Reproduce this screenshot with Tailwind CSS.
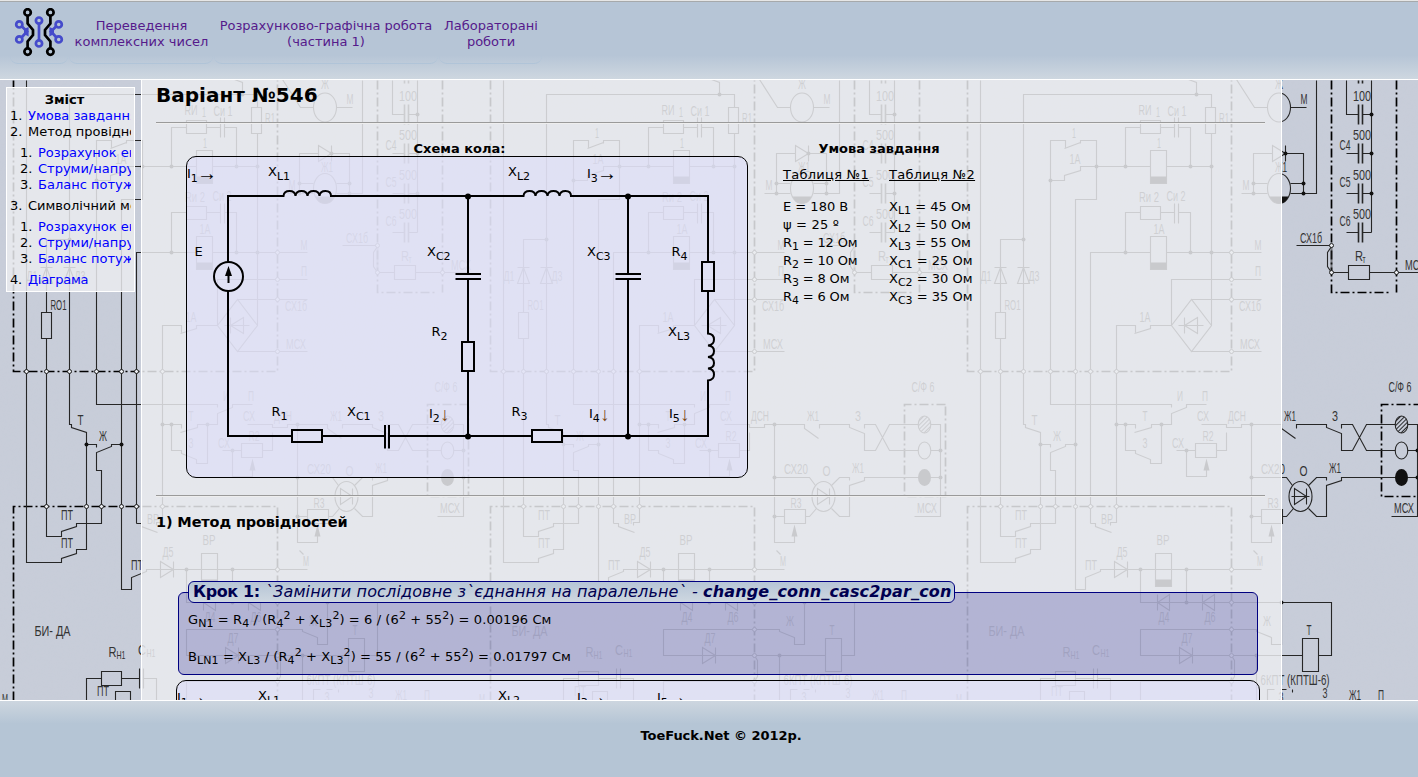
<!DOCTYPE html>
<html lang="uk">
<head>
<meta charset="utf-8">
<title>Варіант №546</title>
<script src="https://cdn.jsdelivr.net/npm/@tailwindcss/browser@4"></script>
</head>
<body class="w-[1418px] h-[777px] overflow-hidden flex flex-col text-[13px] leading-4 text-black bg-[#c6cbd7] [font-family:'DejaVu_Sans',sans-serif]">

<header class="h-20 shrink-0 border-b border-white bg-linear-to-b from-[#b6c5d6] from-70% to-[#ced7e0]">
  <div class="h-px bg-[#e6e6e6]"></div>
  <div class="h-px bg-[#a6a9ab]"></div>
  <nav class="flex h-[62px] gap-px pl-2.5 text-center text-[#551a8b]">
    <a class="w-[58px] rounded-b-lg border-b border-[#b0c4d8] pl-1 pt-1.5">
      <svg width="50" height="50" viewBox="14 8 50 50" fill="none">
        <g stroke="#000" stroke-width="2.7">
          <circle cx="27.6" cy="12.4" r="3.2"/><circle cx="50.4" cy="12.4" r="3.2"/>
          <circle cx="27.6" cy="51.6" r="3.2"/><circle cx="50.4" cy="51.6" r="3.2"/>
          <path d="M27.6 16V23.5L33 30V35L27.6 41.5V48M50.4 16V23.5L45 30V35L50.4 41.5V48"/>
        </g>
        <g stroke="#454bcb" stroke-width="2.7">
          <circle cx="39" cy="20.6" r="3.1"/><circle cx="39" cy="43.4" r="3.1"/><path d="M39 24V40"/>
          <circle cx="19.3" cy="24.4" r="3.1"/><circle cx="19.3" cy="39.4" r="3.1"/>
          <circle cx="58.7" cy="24.4" r="3.1"/><circle cx="58.7" cy="39.4" r="3.1"/>
          <path d="M22 26.5L27 31.5L22 37M56 26.5L51 31.5L56 37"/>
        </g>
        <path d="M24 29L28.6 27V36.5L24 34ZM54 29L49.4 27V36.5L54 34Z" fill="#454bcb"/>
      </svg>
    </a>
    <a class="w-36 rounded-b-lg border-b border-[#b0c4d8] pt-4 pl-px whitespace-nowrap">Переведення<br>комплексних чисел</a>
    <a class="w-[224px] rounded-b-lg border-b border-[#b0c4d8] pt-4 whitespace-nowrap">Розрахунково-графічна робота<br>(частина 1)</a>
    <a class="w-[103px] rounded-b-lg border-b border-[#b0c4d8] pt-4 pl-px whitespace-nowrap">Лабораторані<br>роботи</a>
  </nav>
</header>

<div class="relative h-[620px] shrink-0 overflow-hidden">
  <svg class="absolute inset-0" width="1418" height="620" viewBox="0 80 1418 620">
    <defs>
      <filter id="grain" x="0" y="0" width="100%" height="100%">
        <feTurbulence type="fractalNoise" baseFrequency="0.35" numOctaves="2" seed="4"/>
        <feColorMatrix values="0 0 0 0 .55  0 0 0 0 .6  0 0 0 0 .68  .9 0 0 0 -.3"/>
      </filter>
      <pattern id="hatch" width="3" height="3" patternUnits="userSpaceOnUse" patternTransform="rotate(45)"><path d="M0 0V3" stroke="#000" stroke-width="1.6"/></pattern>
      <g id="tile">
        <g transform="translate(.5 .5)" fill="none" stroke="#262626" stroke-width="1.1">
          <g stroke="#000" stroke-width="1.7" stroke-dasharray="9 3 2 3">
            <path d="M13 80V371H277V80M13 700V506H277V700M377 80V292H437M442 80V292M468 404H427V496H468V404"/>
          </g>
          <path d="M26 80V562H61V558L76 553V549H86V432L71 427V424H69V94H257V107M46 312V239H69M46 338V536H61V531L76 526V523H101V470H96V452L111 446V444H121M86 444H96V447"/>
          <path d="M41 312H51V338H41ZM46 267L40 283H52ZM69 267L63 283H75ZM40 267H52M63 267H75M242 94V82L234 79"/>
          <path d="M217 407V404H96V140H111V147M110 148L126 142M126 143V140H142V199H121V589H131V577L146 571V569H307M96 180H110V175L126 170V166H196M212 166H257M136 523V252H196M212 252H307M136 523H141V526L157 532M156 525V522H162V325H181V332M180 333L196 328V325H217"/>
          <path d="M196 150H212V183H196ZM196 236H212V269H196ZM171 166V127H186M206 127H220M224 127H236V166M186 120H206V133H186ZM220 117V137M224 117V137M171 252V212H186M206 212H220M224 212H236V252M186 206H206V219H186ZM220 203V223M224 203V223"/>
          <path d="M251 107H261V133H251ZM257 133V325L237 351L217 325L237 299L257 325M217 325V279H307M237 299H307M237 351H307M230 317V333M243 317V333L230 325ZM224 325H249"/>
          <path d="M282 79L300 107H313M336 107H352M362 80V193H336M313 193H287M299 193V153H318M331 153H349V193M299 183H313M336 183H349M318 145V161L331 153ZM331 145V161"/>
          <path d="M392 80V114H404M408 114H417M417 80V232M392 153H404M392 193H404M392 232H404M408 153H417M408 193H417M408 232H417"/>
          <path stroke-width="1.6" d="M404 80V83M408 80V83M404 104V124M408 104V124M404 143V163M408 143V163M404 183V203M408 183V203M404 222V242M408 222V242"/>
          <path d="M342 245H377M377 246L373 252V266L377 272H394M415 272H469M394 265H415V279H394Z"/><path stroke-dasharray="1 1" stroke-width="2" d="M377 248V270"/>
          <path d="M247 424H272V427H287V424H327V428L341 438M342 428V424H372V427L387 433V450H398L412 424H441M387 428V424H398L412 450H441M453 424H463V516H437M453 450H463M453 477H463"/>
          <path d="M241 443H262V457H241ZM222 450H241M232 450V476H252V464M262 450H272V432M162 424H181V428M180 432L197 427V424H217V413L232 407V404H252M171 424V450H181V453L196 459V463H207V424"/>
          <path d="M297 424V542H317V532M297 477H332L338 485M297 516H307M307 509H328V523H307ZM328 516H332L339 508M354 485L362 477H372V480M354 508L362 516H372V485L387 480V477H441M340 488V504L352 496ZM352 488V504M337 496H355"/>
          <path d="M160 561V577L173 569ZM173 561V577M201 553H217V586H201ZM186 569V602H377V655H364M232 569V602M203 594V610M215 594V610L203 602ZM248 594V610M260 594V610L248 602ZM348 638H364V671H348ZM348 655H186V629H302V631L317 637V644H327V602M225 647V663L238 655ZM238 647V663M302 655V700M277 655L280 660V676L277 681H186V700M299 550L303 554"/>
          <path d="M101 671H121V685H101ZM86 700V678H101M121 678H139M143 678H156V700M139 668V688M143 668V688M115 700V691H130V700M313 700V689H320M326 689H332M338 689V692"/>
          <ellipse cx="324.500" cy="107" rx="11.500" ry="14.500"/><ellipse cx="324.500" cy="188" rx="11.500" ry="15"/>
          <ellipse cx="346" cy="496" rx="11.500" ry="15"/><ellipse cx="447" cy="424" rx="6.300" ry="8.500" fill="url(#hatch)"/><ellipse cx="447" cy="450" rx="6.300" ry="8.500"/>
        </g>
        <g transform="translate(.5 .5)" fill="#111">
          <ellipse cx="447" cy="477" rx="6.500" ry="8.500"/>
          <path d="M196 176H212V183H196ZM196 262H212V269H196ZM201 579H217V586H201ZM315 196H334Q331 203 324.500 203Q318 203 315 196ZM252 458L249 470H255ZM317 524L314 536H320Z"/>
        </g>
        <g id="dots" fill="#111"></g>
        <g id="rings" fill="#eceef2" stroke="#222"></g>
        <g id="names" fill="#333" font-family="'Liberation Sans', sans-serif" font-size="14" text-anchor="middle"></g>
      </g>
    </defs>
    <rect y="80" width="1418" height="620" fill="#c8cdd9"/>
    <rect y="80" width="1418" height="620" filter="url(#grain)" opacity=".5"/>
    <use href="#tile"/><use href="#tile" x="477"/><use href="#tile" x="954"/>
  </svg>

  <div class="relative flex h-full items-start">
    <aside class="mt-[7px] ml-1.5 h-[205px] w-[129px] shrink-0 border border-white bg-[#eaebef]/85 pt-1 pr-[3px] pl-[3px]">
      <div class="h-[197px] overflow-hidden whitespace-nowrap">
        <div class="pr-3 text-center font-bold">Зміст</div>
        <div class="flex"><span class="w-[18px] shrink-0">1.</span><a class="text-[#00f]">Умова завдання</a></div>
        <div class="flex"><span class="w-[18px] shrink-0">2.</span>Метод провідностей</div>
        <div class="my-[5px] pl-2.5">
          <div class="flex"><span class="w-[18px] shrink-0">1.</span><a class="text-[#00f]">Розрахунок еквівалентних</a></div>
          <div class="flex"><span class="w-[18px] shrink-0">2.</span><a class="text-[#00f]">Струми/напруги</a></div>
          <div class="flex"><span class="w-[18px] shrink-0">3.</span><a class="text-[#00f]">Баланс потужностей</a></div>
        </div>
        <div class="flex"><span class="w-[18px] shrink-0">3.</span>Символічний метод</div>
        <div class="my-[5px] pl-2.5">
          <div class="flex"><span class="w-[18px] shrink-0">1.</span><a class="text-[#00f]">Розрахунок еквівалентних</a></div>
          <div class="flex"><span class="w-[18px] shrink-0">2.</span><a class="text-[#00f]">Струми/напруги</a></div>
          <div class="flex"><span class="w-[18px] shrink-0">3.</span><a class="text-[#00f]">Баланс потужностей</a></div>
        </div>
        <div class="flex tracking-[-0.3px]"><span class="w-[18px] shrink-0">4.</span><a class="text-[#00f]">Діаграма</a></div>
      </div>
    </aside>

    <main class="ml-1.5 h-full w-[1141px] shrink-0 overflow-hidden border-x border-white bg-[#eaebef]/85 px-3.5">
      <h1 class="h-[42px] pt-0.5 text-xl leading-[26px] font-bold whitespace-nowrap">Варіант №546</h1>
      <div class="mr-0.5 h-0.5 border-t border-b border-t-[#9a9a9a] border-b-[#eeeeee]"></div>
      <div class="flex pt-4 pl-[30px]">
        <section class="w-[562px]">
          <h2 class="relative top-px text-center font-bold pr-[15px]">Схема кола:</h2>
          <div class="h-[322px] rounded-[10px] border border-black bg-[#dbdbfc]/50">
            <svg width="560" height="320" viewBox="187 157 560 320">
              <g fill="none" stroke="#000" stroke-width="2">
                <path d="M228 262V196H283.500Q284 191 289.500 191Q295 191 295.500 196Q296 191 301.500 191Q307 191 307.500 196Q308 191 313.500 191Q319 191 319.500 196Q320 191 325.500 191Q331 191 331 196H523.500Q524 191 529.500 191Q535 191 535.500 196Q536 191 541.500 191Q547 191 547.500 196Q548 191 553.500 191Q559 191 559.500 196Q560 191 565.500 191Q571 191 571 196H708V262"/>
                <path d="M708 291V333.500Q714 334 714 339.500Q714 345 708 345.500Q714 346 714 351Q714 356.500 708 357Q714 357.500 714 363Q714 368 708 368.500Q714 369 714 374.500Q714 380 708 380.500V436H562M532 436H389M385 436H322M292 436H228V291"/>
                <path d="M468 196V274M468 279V341M468 371V436M628 196V274M628 279V436M455.500 274H481M455.500 279H481M615.500 274H641M615.500 279H641M385 425V448.500M389 425V448.500"/>
                <path d="M462 342H474V371H462ZM702 262H714V291H702ZM292 430H322V442H292ZM532 430H562V442H532Z"/>
                <circle cx="228.500" cy="276.500" r="14.500"/>
                <path d="M228.500 274V283"/>
              </g>
              <path d="M228.500 266L232 276H225Z"/>
              <circle cx="468" cy="196.500" r="3"/><circle cx="628" cy="196.500" r="3"/><circle cx="468" cy="436.500" r="3"/><circle cx="628" cy="436.500" r="3"/>
              <g font-size="13">
                <text x="187" y="178">I<tspan font-size="11" dy="4">1</tspan><tspan x="197" y="180" font-size="20" font-family="'Liberation Sans'">→</tspan></text>
                <text x="587" y="178">I<tspan font-size="11" dy="4">3</tspan><tspan x="597" y="180" font-size="20" font-family="'Liberation Sans'">→</tspan></text>
                <text x="268" y="176">X<tspan font-size="11" dy="4">L1</tspan></text>
                <text x="508" y="176">X<tspan font-size="11" dy="4">L2</tspan></text>
                <text x="194.500" y="256">E</text>
                <text x="427" y="256">X<tspan font-size="11" dy="4">C2</tspan></text>
                <text x="587" y="256">X<tspan font-size="11" dy="4">C3</tspan></text>
                <text x="671.500" y="256">R<tspan font-size="11" dy="4">4</tspan></text>
                <text x="431.500" y="336">R<tspan font-size="11" dy="4">2</tspan></text>
                <text x="668" y="336">X<tspan font-size="11" dy="4">L3</tspan></text>
                <text x="271.500" y="416">R<tspan font-size="11" dy="4">1</tspan></text>
                <text x="347" y="416">X<tspan font-size="11" dy="4">C1</tspan></text>
                <text x="511.500" y="416">R<tspan font-size="11" dy="4">3</tspan></text>
                <text x="429" y="418">I<tspan font-size="11" dy="4">2</tspan></text>
                <text x="589" y="418">I<tspan font-size="11" dy="4">4</tspan></text>
                <text x="669" y="418">I<tspan font-size="11" dy="4">5</tspan></text>
                <g font-size="19" fill="#7a4818" text-anchor="middle" font-family="'Liberation Sans'"><text x="445" y="421">↓</text><text x="605" y="421">↓</text><text x="685" y="421">↓</text></g>
              </g>
            </svg>
          </div>
        </section>
        <section class="ml-[35px] w-[192px] whitespace-nowrap">
          <h2 class="relative top-px text-center font-bold">Умова завдання</h2>
          <div class="mt-2.5 flex gap-5 leading-[18px]">
            <div class="w-[86px]">
              <div class="mb-3.5 tracking-[0.28px] underline">Таблиця №1</div>
              <div>E = 180 В</div>
              <div class="tracking-[0.2px]">ψ = 25 º</div>
              <div class="tracking-[-0.15px]">R<sub class="text-[11px]">1</sub> = 12 Ом</div>
              <div class="tracking-[-0.15px]">R<sub class="text-[11px]">2</sub> = 10 Ом</div>
              <div class="tracking-[-0.15px]">R<sub class="text-[11px]">3</sub> = 8 Ом</div>
              <div class="tracking-[-0.15px]">R<sub class="text-[11px]">4</sub> = 6 Ом</div>
            </div>
            <div class="w-[86px]">
              <div class="mb-3.5 tracking-[0.28px] underline">Таблиця №2</div>
              <div>X<sub class="text-[11px]">L1</sub> = 45 Ом</div>
              <div>X<sub class="text-[11px]">L2</sub> = 50 Ом</div>
              <div>X<sub class="text-[11px]">L3</sub> = 55 Ом</div>
              <div>X<sub class="text-[11px]">C1</sub> = 25 Ом</div>
              <div>X<sub class="text-[11px]">C2</sub> = 30 Ом</div>
              <div>X<sub class="text-[11px]">C3</sub> = 35 Ом</div>
            </div>
          </div>
        </section>
      </div>
      <div class="mt-[17px] mr-0.5 h-0.5 border-t border-b border-t-[#9a9a9a] border-b-[#eeeeee]"></div>
      <h3 class="mt-4 h-[18px] text-[14.5px] leading-[18px] font-bold tracking-[-0.14px] whitespace-nowrap">1) Метод провідностей</h3>
      <section class="relative mt-[61px] ml-[22px] h-[83px] w-[1080px] rounded-md border border-[#000080] bg-[#000080]/22 pt-[18px] pl-[9px] tracking-[0.09px] whitespace-nowrap">
        <h4 class="absolute -top-3 left-[9px] flex h-[22px] w-[767px] items-center rounded-md border border-[#000080] bg-linear-to-b from-[#b6c5d6] to-[#ced7e0] pl-1 text-base tracking-normal whitespace-pre text-[#000050]"><b class="tracking-[-0.4px]">Крок 1:</b><i class="tracking-[0.14px]"> `Замінити послідовне з`єднання на паралельне` - <b>change_conn_casc2par_con</b></i></h4>
        <p class="h-[37px] leading-[18px]">G<sub class="text-[11px]">N1</sub> = R<sub class="text-[11px]">4</sub> / (R<sub class="text-[11px]">4</sub><sup class="text-[11px]">2</sup> + X<sub class="text-[11px]">L3</sub><sup class="text-[11px]">2</sup>) = 6 / (6<sup class="text-[11px]">2</sup> + 55<sup class="text-[11px]">2</sup>) = 0.00196 См</p>
        <p class="leading-[18px]">B<sub class="text-[11px]">LN1</sub> = X<sub class="text-[11px]">L3</sub> / (R<sub class="text-[11px]">4</sub><sup class="text-[11px]">2</sup> + X<sub class="text-[11px]">L3</sub><sup class="text-[11px]">2</sup>) = 55 / (6<sup class="text-[11px]">2</sup> + 55<sup class="text-[11px]">2</sup>) = 0.01797 См</p>
      </section>
      <section class="mt-[5px] ml-5 h-[322px] w-[1084px] rounded-[10px] border border-black bg-[#dbdbfc]/50">
        <svg width="1080" height="320" viewBox="177 681 1080 320" font-size="13">
          <text x="177" y="702">I<tspan font-size="11" dy="4">1</tspan><tspan x="187" y="704" font-size="20" font-family="'Liberation Sans'">→</tspan></text>
          <text x="258" y="700">X<tspan font-size="11" dy="4">L1</tspan></text>
          <text x="498" y="700">X<tspan font-size="11" dy="4">L2</tspan></text>
          <text x="577" y="702">I<tspan font-size="11" dy="4">3</tspan><tspan x="587" y="704" font-size="20" font-family="'Liberation Sans'">→</tspan></text>
          <text x="657" y="702">I<tspan font-size="11" dy="4">5</tspan><tspan x="667" y="704" font-size="20" font-family="'Liberation Sans'">→</tspan></text>
        </svg>
      </section>
    </main>
  </div>
</div>

<footer class="flex h-[77px] shrink-0 justify-center border-t border-white bg-linear-to-b from-[#cdd6df] to-[#b5c5d5] to-30% pt-[27px] pl-6 font-bold tracking-[-0.05px]">ToeFuck.Net © 2012p.</footer>

<script>
const NS = 'http://www.w3.org/2000/svg';
function add(parent, tag, attrs, text) {
  const e = document.createElementNS(NS, tag);
  for (const k in attrs) e.setAttribute(k, attrs[k]);
  if (text) e.textContent = text;
  document.getElementById(parent).appendChild(e);
}
[[69,239],[86,444],[121,444],[96,180],[142,166],[171,166],[236,166],[257,166],[171,252],[236,252],[257,252],[242,94],
 [299,183],[299,193],[349,183],[349,193],[331,153],[417,114],[417,153],[417,193],[162,424],[171,424],[207,424],[297,424],[297,477],[297,516],[232,450],
 [463,450],[463,477],[186,569],[232,569],[232,602],[327,602],[302,655]]
 .forEach(p => add('dots', 'circle', {cx: p[0] + .5, cy: p[1] + .5, r: 2}));
[[26,371],[46,371],[69,371],[96,371],[121,371],[136,371],[162,371],[46,506],[86,506],[101,506],[121,506],[136,506],[162,506],
 [277,252],[277,279],[277,299],[277,351],[377,245],[377,272],[442,272],[277,569],[277,602],[277,629],[277,655],[277,681]]
 .forEach(p => add('rings', 'circle', {cx: p[0] + .5, cy: p[1] + .5, r: 2}));
// label, centre x, centre y, drawn width
[['RO1',58.5,305,16],['Д1',32,276,11],['Д3',80,276,11],['Т',80.5,420,6],['Ж',103,436,8],['1',120,133,4],['1А',121,159,11],['1А',191,317,11],
 ['RИ',191,110,13],['1',204,112,4],['Си 1',223,111,19],['1',205,143,4],['R1',270,118,10],['Rи 2',195,197,20],['Си 2',222,196,19],['1А',205,229,11],
 ['М',304,245,7],['П',304,271,6],['СХ1б',296,306,22],['МСХ',296,344,20],['М',350,99,7],['Ж',325,84,8],['М',292,185,7],['Ж1',327,167,12],
 ['100',408,96,18],['500',408,135,18],['500',408,175,18],['500',408,214,18],['С4',391,145,11],['С5',391,182,11],['С6',391,221,11],['СХ1б',357,238,22],
 ['R',405,256,8],['МСХ',461,265,20],['С/Ф 6',446,387,23],['МСХ',450,508,20],['З',381,416,6],['Ж1',336,416,12],['ДСН',283,416,18],['СХ',249,416,12],
 ['R2',254,436,11],['СХ',224,443,12],['Т',191,416,5],['И',226,396,6],['П',251,396,6],['З',191,443,5],['СХ20',319,469,24],['О',349.5,471,8],['Ж1',381,468,12],
 ['R3',319,503,11],['ВР',153,519,12],['ПТ',67,515,12],['ПТ',67,543,12],['ПТ',137,565,12],['Д5',168,552,11],['ВР',209,540,13],['М',306,561,6],
 ['Д4',210,617,11],['Д6',256,617,11],['Т',355,630,5],['Ж',313,621,8],['Д7',233,638,11],['6КПТ (КПТШ-6)',341,680,69],['З',371,693,5],['Ж1',401,695,12],['П',427,695,6],
 ['З',327,697,5],['БИ- ДА',52.5,631,36],['R',112.5,652,8],['Н1',121,655,9],['С',142,650,8],['Н1',151,653,9],['ПТ',103,691,12],['М',5,699,6],['т',410,259,3]]
 .forEach(([t, x, y, w]) => {
   const small = t === 'Н1' || t === 'т';
   add('names', 'text', {x: x, y: y + (small ? 3.500 : 5), 'font-size': small ? 11 : 14, textLength: w, lengthAdjust: 'spacingAndGlyphs'}, t);
 });
</script>
</body>
</html>
